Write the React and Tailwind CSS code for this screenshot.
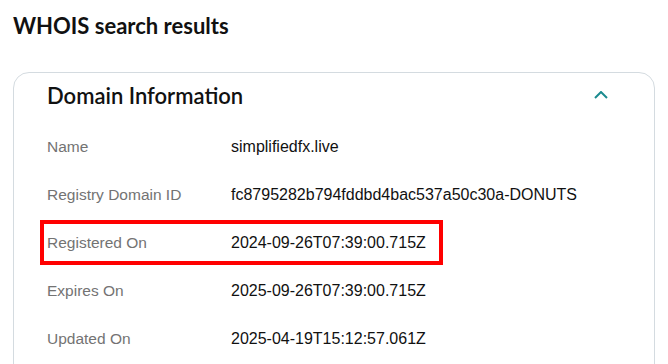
import React from "react";

const rows = [
  { label: "Name", value: "simplifiedfx.live" },
  { label: "Registry Domain ID", value: "fc8795282b794fddbd4bac537a50c30a-DONUTS" },
  { label: "Registered On", value: "2024-09-26T07:39:00.715Z", marked: true },
  { label: "Expires On", value: "2025-09-26T07:39:00.715Z" },
  { label: "Updated On", value: "2025-04-19T15:12:57.061Z" },
];

const App = () => {
  return (
    <div className="bg-white min-h-screen px-[13px] pt-[12px] pb-6">
      <h1 className="text-[22px] leading-[28px] font-bold text-[#111111] font-['Lato',sans-serif]">
        WHOIS search results
      </h1>

      <div className="mt-[32px] w-[642px] border border-[#d4dbe0] rounded-[16px] font-['Liberation_Sans',Arial,sans-serif]">
        <div className="h-[44px] flex items-center justify-between pl-[33px] pr-[46px]">
          <h2 className="text-[22px] font-semibold text-[#111111] font-['Lato',sans-serif]">
            Domain Information
          </h2>
          <svg width="14" height="8" viewBox="0 0 14 8" fill="none">
            <polyline
              points="1,7 7,1 13,7"
              stroke="#1b8b8f"
              strokeWidth="2"
            />
          </svg>
        </div>

        <div className="mt-[6px] pb-4">
          {rows.map((row) => (
            <div
              key={row.label}
              className="relative h-[48px] flex items-center pl-[33px]"
            >
              <span className="w-[184px] text-[15.5px] text-[#737373]">{row.label}</span>
              <span className="text-[16px] text-[#111111]">{row.value}</span>
              {row.marked && (
                <span className="absolute left-[26px] top-[1px] w-[403px] h-[45px] border-4 border-[#ff0000] pointer-events-none" />
              )}
            </div>
          ))}
        </div>
      </div>
    </div>
  );
};

export default App;
